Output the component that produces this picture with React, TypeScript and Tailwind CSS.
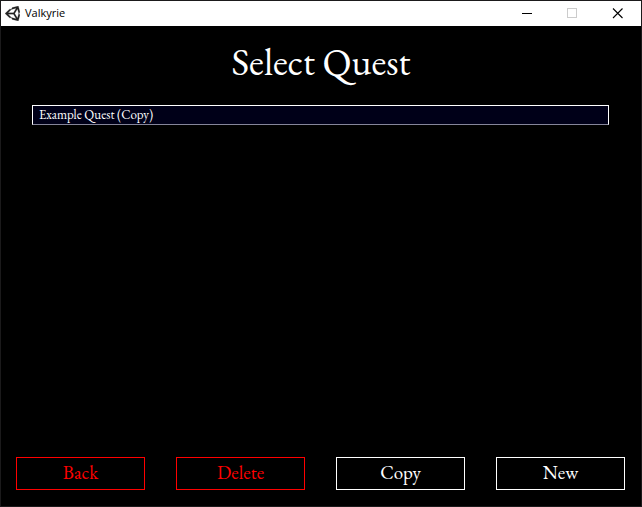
import React, { useState } from "react";

function UnityIcon() {
  return (
    <svg viewBox="15 14 484 484" className="size-[15px]" fill="#222" stroke="#222" strokeWidth="6" aria-hidden="true">
      <path d="M498.11,206.4,445.31,14.72,248.2,66.08,219,116.14l-59.2-.43L15.54,256,159.82,396.32l59.17-.43,29.24,50,197.08,51.36,52.8-191.62-30-49.63ZM223.77,124.2,374.55,86.51,288,232.33H114.87Zm0,263.63L114.87,279.71H288l86.55,145.81Zm193,14L330.17,256l86.58-145.84L458.56,256Z" />
    </svg>
  );
}

function TitleBar() {
  const control = "flex h-full w-[45px] items-center justify-center";
  return (
    <header className="flex h-[25px] items-center bg-white pr-px pl-1 text-black">
      <UnityIcon />
      <span className="flex-1 pb-[2px] pl-[5px] font-['Open_Sans',sans-serif] text-[11px] leading-4">Valkyrie</span>
      <button type="button" aria-label="Minimize" className={control}>
        <svg className="size-[11px]" viewBox="0 0 11 11" shapeRendering="crispEdges" aria-hidden="true">
          <path d="M0 5h10v1H0z" fill="#000" />
        </svg>
      </button>
      <button type="button" aria-label="Maximize" disabled className={control}>
        <svg className="size-[11px]" viewBox="0 0 11 11" shapeRendering="crispEdges" aria-hidden="true">
          <path d="M.5.5h9v9h-9z" fill="none" stroke="#ccc" />
        </svg>
      </button>
      <button type="button" aria-label="Close" className={control}>
        <svg className="size-[11px]" viewBox="0 0 11 11" aria-hidden="true">
          <path d="M1 .5l9.5 9.5M10.500 .5L1 10" fill="none" stroke="#000" strokeWidth="1.1" />
        </svg>
      </button>
    </header>
  );
}

function ActionButton({ label, danger = false }: { label: string; danger?: boolean }) {
  return (
    <button
      type="button"
      className={`flex h-[33px] items-center justify-center border pb-px text-[19px] leading-6 ${
        danger ? "border-[#f00] text-[#f00]" : "border-white text-white"
      }`}
    >
      {label}
    </button>
  );
}

export default function App() {
  const [quests] = useState(["Example Quest (Copy)"]);
  return (
    <div className="flex min-h-screen flex-col border border-[#1b1a1b] bg-black font-['EB_Garamond','Liberation_Serif',serif] text-white">
      <TitleBar />
      <main className="flex flex-1 flex-col">
        <h1 className="pt-[14px] text-center text-[38px] leading-[44px]">Select Quest</h1>
        <ul className="flex-1 pt-[21px] pr-8 pl-[31px]">
          {quests.map((quest) => (
            <li key={quest}>
              <button
                type="button"
                className="flex h-5 w-full items-center border border-white border-b-[#85859a] bg-[#000018] px-[6px] text-[13px] leading-4"
              >
                {quest}
              </button>
            </li>
          ))}
        </ul>
        <nav className="grid grid-cols-4 gap-[31px] pr-4 pb-4 pl-[15px]">
          <ActionButton label="Back" danger />
          <ActionButton label="Delete" danger />
          <ActionButton label="Copy" />
          <ActionButton label="New" />
        </nav>
      </main>
    </div>
  );
}
